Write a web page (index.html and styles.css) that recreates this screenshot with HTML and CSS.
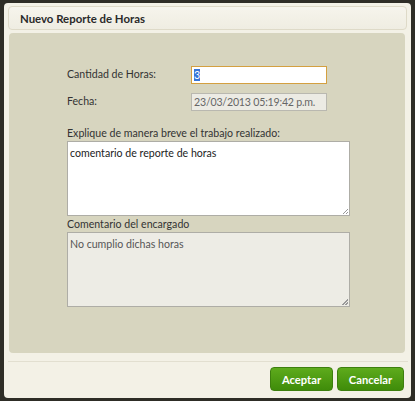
FILE: index.html
```html
<!DOCTYPE html>
<html>
<head>
<meta charset="utf-8">
<link rel="stylesheet" href="styles.css">
</head>
<body>
<div class="dialog">
  <div class="titlebar">Nuevo Reporte de Horas</div>
  <div class="content">
    <div class="form">
      <div class="row">
        <label class="lbl">Cantidad de Horas:</label>
        <div class="input focus"><span class="sel">3</span></div>
      </div>
      <div class="row">
        <label class="lbl">Fecha:</label>
        <div class="input disabled">23/03/2013 05:19:42 p.m.</div>
      </div>
      <div class="block first">
        <div class="lbl">Explique de manera breve el trabajo realizado:</div>
        <div class="area">comentario de reporte de horas<span class="grip"></span></div>
      </div>
      <div class="block">
        <div class="lbl">Comentario del encargado</div>
        <div class="area ro">No cumplio dichas horas<span class="grip"></span></div>
      </div>
    </div>
  </div>
  <div class="footer">
    <button class="btn">Aceptar</button>
    <button class="btn">Cancelar</button>
  </div>
</div>
</body>
</html>
```
FILE: styles.css
```css
html, body { margin: 0; padding: 0; }
body {
  background: #2e2d26;
  width: 415px;
  height: 401px;
  overflow: hidden;
  font-family: "Lato", "Open Sans", sans-serif;
  padding: 3px 4px 0 4px;
  box-sizing: border-box;
}
.dialog {
  background: #f3f1e6;
  border-radius: 4px;
  height: 395px;
  box-sizing: border-box;
  padding: 3px 3px 0 4px;
  display: flex;
  flex-direction: column;
}
.titlebar {
  height: 24px;
  box-sizing: border-box;
  border: 1px solid #dedac8;
  border-radius: 4px;
  background: linear-gradient(#f6f4ec, #efede2);
  font-weight: 700;
  font-size: 11.4px;
  color: #2a2a2a;
  padding-left: 11px;
  line-height: 23px;
  margin-right: 1px;
}
.content {
  margin-top: 3px;
  margin-left: 1px;
  margin-right: 3px;
  height: 320px;
  background: #d7d5bf;
  border-radius: 4px;
  box-sizing: border-box;
  padding: 33px 0 0 58px;
}
.form { width: 283px; }
.row {
  display: grid;
  grid-template-columns: 124px 136px;
  align-items: start;
  margin-bottom: 9px;
}
.lbl {
  font-size: 10.6px;
  color: #333;
  line-height: 14px;
  white-space: nowrap;
}
.row .lbl { padding-top: 1px; }
.input {
  height: 18px;
  box-sizing: border-box;
  font-size: 10.6px;
  line-height: 16px;
  padding: 0 2px;
  white-space: nowrap;
  overflow: hidden;
}
.input.focus {
  background: #fff;
  border: 1px solid #d4a040;
}
.sel { background: #3875d7; color: #fff; }
.input.disabled {
  background: #ecebe4;
  border: 1px solid #b9b8b0;
  color: #666;
  letter-spacing: -0.2px;
}
.block.first { margin-top: 15px; }
.block { margin-bottom: 1px; }
.block .lbl { margin-bottom: 1px; }
.area {
  position: relative;
  height: 75px;
  box-sizing: border-box;
  background: #fff;
  border: 1px solid #aeada6;
  font-size: 10.6px;
  line-height: 15px;
  color: #222;
  padding: 4px 2px;
}
.area.ro { background: #edece5; color: #555; }
.grip {
  position: absolute;
  right: 1px;
  bottom: 1px;
  width: 6px;
  height: 6px;
  background: linear-gradient(135deg, transparent 50%, #999 50%, #999 60%, transparent 60%, transparent 75%, #999 75%, #999 85%, transparent 85%);
}
.footer {
  margin-top: 8px;
  border-top: 1px solid #e2dfd0;
  display: flex;
  justify-content: flex-end;
  gap: 4px;
  padding: 5px 4px 0 0;
}
.btn {
  height: 24px;
  box-sizing: border-box;
  border: 1px solid #3d7f0e;
  border-radius: 4px;
  background: linear-gradient(#5eab1c, #3f8c0a);
  color: #fff;
  font-family: "Lato", "Open Sans", sans-serif;
  font-weight: 700;
  font-size: 11.2px;
  padding: 0 10px;
}
.btn:first-child { width: 63px; }
.btn:last-child { width: 67px; }
```
